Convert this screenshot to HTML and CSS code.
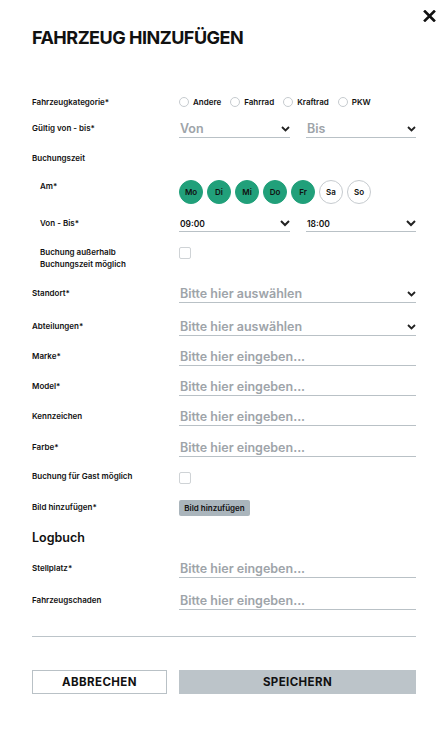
FILE: index.html
```html
<!DOCTYPE html>
<html lang="de">
<head>
<meta charset="utf-8">
<title>Fahrzeug hinzufügen</title>
<link rel="stylesheet" href="styles.css">
</head>
<body>
<div class="modal">
  <button class="close" aria-label="Schließen">
    <svg width="13" height="12" viewBox="0 0 13 12"><path d="M2 1.5 L11 10.5 M11 1.5 L2 10.5" stroke="#111" stroke-width="2.6" stroke-linecap="square"/></svg>
  </button>
  <h1 class="title">FAHRZEUG HINZUFÜGEN</h1>

  <div class="row row-kat">
    <div class="label">Fahrzeugkategorie*</div>
    <div class="radios">
      <span class="radio"><i></i>Andere</span>
      <span class="radio"><i></i>Fahrrad</span>
      <span class="radio"><i></i>Kraftrad</span>
      <span class="radio"><i></i>PKW</span>
    </div>
  </div>

  <div class="row row-field r-gueltig">
    <div class="label">Gültig von - bis*</div>
    <div class="pair">
      <div class="select big"><span>Von</span><svg class="chev" width="9" height="6" viewBox="0 0 9 6"><path d="M1 1 L4.5 4.5 L8 1" fill="none" stroke="#222" stroke-width="1.8"/></svg></div>
      <div class="select big"><span>Bis</span><svg class="chev" width="9" height="6" viewBox="0 0 9 6"><path d="M1 1 L4.5 4.5 L8 1" fill="none" stroke="#222" stroke-width="1.8"/></svg></div>
    </div>
  </div>

  <div class="section-label">Buchungszeit</div>

  <div class="row row-days">
    <div class="label sub">Am*</div>
    <div class="days">
      <span class="day on">Mo</span>
      <span class="day on">Di</span>
      <span class="day on">Mi</span>
      <span class="day on">Do</span>
      <span class="day on">Fr</span>
      <span class="day">Sa</span>
      <span class="day">So</span>
    </div>
  </div>

  <div class="row row-field r-vonbis">
    <div class="label sub">Von - Bis*</div>
    <div class="pair">
      <div class="select time"><span>09:00</span><svg class="chev" width="10" height="7" viewBox="0 0 10 7"><path d="M1 1 L5 5 L9 1" fill="none" stroke="#222" stroke-width="2"/></svg></div>
      <div class="select time"><span>18:00</span><svg class="chev" width="10" height="7" viewBox="0 0 10 7"><path d="M1 1 L5 5 L9 1" fill="none" stroke="#222" stroke-width="2"/></svg></div>
    </div>
  </div>

  <div class="row row-check r-ausser">
    <div class="label sub">Buchung außerhalb<br>Buchungszeit möglich</div>
    <div><span class="checkbox"></span></div>
  </div>

  <div class="row row-field r-standort">
    <div class="label">Standort*</div>
    <div class="select big"><span>Bitte hier auswählen</span><svg class="chev" width="9" height="6" viewBox="0 0 9 6"><path d="M1 1 L4.5 4.5 L8 1" fill="none" stroke="#222" stroke-width="1.8"/></svg></div>
  </div>

  <div class="row row-field r-abt">
    <div class="label">Abteilungen*</div>
    <div class="select big"><span>Bitte hier auswählen</span><svg class="chev" width="9" height="6" viewBox="0 0 9 6"><path d="M1 1 L4.5 4.5 L8 1" fill="none" stroke="#222" stroke-width="1.8"/></svg></div>
  </div>

  <div class="row row-field r-marke">
    <div class="label">Marke*</div>
    <div class="input">Bitte hier eingeben...</div>
  </div>

  <div class="row row-field r-std">
    <div class="label">Model*</div>
    <div class="input">Bitte hier eingeben...</div>
  </div>

  <div class="row row-field r-std">
    <div class="label">Kennzeichen</div>
    <div class="input">Bitte hier eingeben...</div>
  </div>

  <div class="row row-field r-farbe">
    <div class="label">Farbe*</div>
    <div class="input">Bitte hier eingeben...</div>
  </div>

  <div class="row row-gast">
    <div class="label">Buchung für Gast möglich</div>
    <div><span class="checkbox gast"></span></div>
  </div>

  <div class="row row-bild">
    <div class="label">Bild hinzufügen*</div>
    <div><button class="upload">Bild hinzufügen</button></div>
  </div>

  <h2 class="logbuch">Logbuch</h2>

  <div class="row row-field r-stell">
    <div class="label">Stellplatz*</div>
    <div class="input">Bitte hier eingeben...</div>
  </div>

  <div class="row row-field r-stell">
    <div class="label">Fahrzeugschaden</div>
    <div class="input">Bitte hier eingeben...</div>
  </div>

  <hr class="divider">

  <div class="actions">
    <button class="btn cancel">ABBRECHEN</button>
    <button class="btn save">SPEICHERN</button>
  </div>
</div>
</body>
</html>
```

FILE: styles.css
```css
* { box-sizing: border-box; }
html, body { margin: 0; padding: 0; background: #fff; }
body {
  font-family: "Inter", "Open Sans", sans-serif;
  color: #111;
  width: 448px;
  height: 742px;
  overflow: hidden;
}
.modal {
  position: relative;
  padding: 26px 32px 0 32px;
}
.close {
  position: absolute;
  top: 10px;
  left: 423px;
  width: 13px;
  height: 12px;
  padding: 0;
  border: 0;
  background: none;
  display: block;
}
.close svg { display: block; }
.title {
  margin: 0;
  font-size: 18px;
  line-height: 24px;
  font-weight: 700;
  letter-spacing: -0.5px;
  color: #111;
}
.row {
  display: grid;
  grid-template-columns: 147px 237px;
  align-items: start;
}
.label {
  font-size: 8px;
  line-height: 12px;
  font-weight: 600;
  color: #111;
}
.label.sub { padding-left: 8px; }

.row-kat { margin-top: 46px; height: 12px; }
.radios { display: flex; align-items: center; height: 12px; }
.radio {
  display: inline-flex;
  align-items: center;
  font-size: 8px;
  font-weight: 600;
  margin-right: 9px;
  white-space: nowrap;
}
.radio i {
  display: inline-block;
  width: 10px;
  height: 10px;
  border: 1px solid #c6cbcf;
  border-radius: 50%;
  margin-right: 4px;
}

.row-field { height: 18px; }
.row-field .label { padding-top: 2px; }
.row-field .label.sub { padding-top: 3px; }
.r-gueltig { margin-top: 12px; }
.r-vonbis { margin-top: 10px; }
.r-standort { margin-top: 15px; }
.r-abt { margin-top: 15px; }
.r-marke { margin-top: 12px; }
.r-std { margin-top: 12px; }
.r-farbe { margin-top: 13px; }
.r-stell { margin-top: 14px; }

.pair { display: grid; grid-template-columns: 111px 110px; column-gap: 16px; }

.select, .input {
  height: 18px;
  border-bottom: 1px solid #b9c1c6;
  display: flex;
  align-items: center;
  justify-content: space-between;
  font-size: 12.5px;
  font-weight: 600;
  color: #9ea4a9;
  white-space: nowrap;
  padding-left: 1px;
}
.select .chev { flex: none; margin-top: 1px; }
.select.time {
  font-size: 8.5px;
  color: #111;
  font-weight: 600;
  padding-top: 2px;
}
.select.time .chev { margin-top: -1px; }

.section-label {
  margin-top: 14px;
  font-size: 8px;
  line-height: 12px;
  font-weight: 600;
}

.row-days { margin-top: 16px; height: 24px; }
.row-days .label { padding-top: 0px; }
.days { display: flex; gap: 4px; }
.day {
  width: 24px;
  height: 24px;
  border-radius: 50%;
  border: 1px solid #c6cbcf;
  display: flex;
  align-items: center;
  justify-content: center;
  font-size: 8px;
  font-weight: 600;
  color: #111;
}
.day.on { background: #21a07a; border-color: #21a07a; }

.row-check { height: 24px; }
.r-ausser { margin-top: 14px; }
.checkbox {
  display: block;
  width: 12px;
  height: 12px;
  border: 1px solid #cfd3d6;
  border-radius: 2px;
  margin-top: 1px;
}
.row-gast { margin-top: 13px; height: 13px; }
.checkbox.gast { margin-top: 2px; }

.row-bild { margin-top: 17px; height: 16px; }
.row-bild .label { padding-top: 1px; }
.upload {
  display: block;
  height: 16px;
  width: 71px;
  padding: 0;
  border: 0;
  border-radius: 2px;
  background: #aab5bc;
  font-family: inherit;
  font-size: 8px;
  font-weight: 600;
  color: #111;
}

.logbuch {
  margin: 14px 0 0 0;
  font-size: 12.5px;
  line-height: 16px;
  font-weight: 600;
  color: #111;
}

.divider {
  margin: 26px 0 0 0;
  border: 0;
  height: 1px;
  background: #bcc4c9;
}

.actions {
  margin-top: 33px;
  display: grid;
  grid-template-columns: 135px 237px;
  column-gap: 12px;
}
.btn {
  height: 24px;
  font-family: inherit;
  font-size: 11.5px;
  font-weight: 700;
  color: #111;
  padding: 0;
  letter-spacing: 0.4px;
}
.cancel { background: #fff; border: 1px solid #b9c1c6; }
.save { background: #bcc4c9; border: 0; }
```
